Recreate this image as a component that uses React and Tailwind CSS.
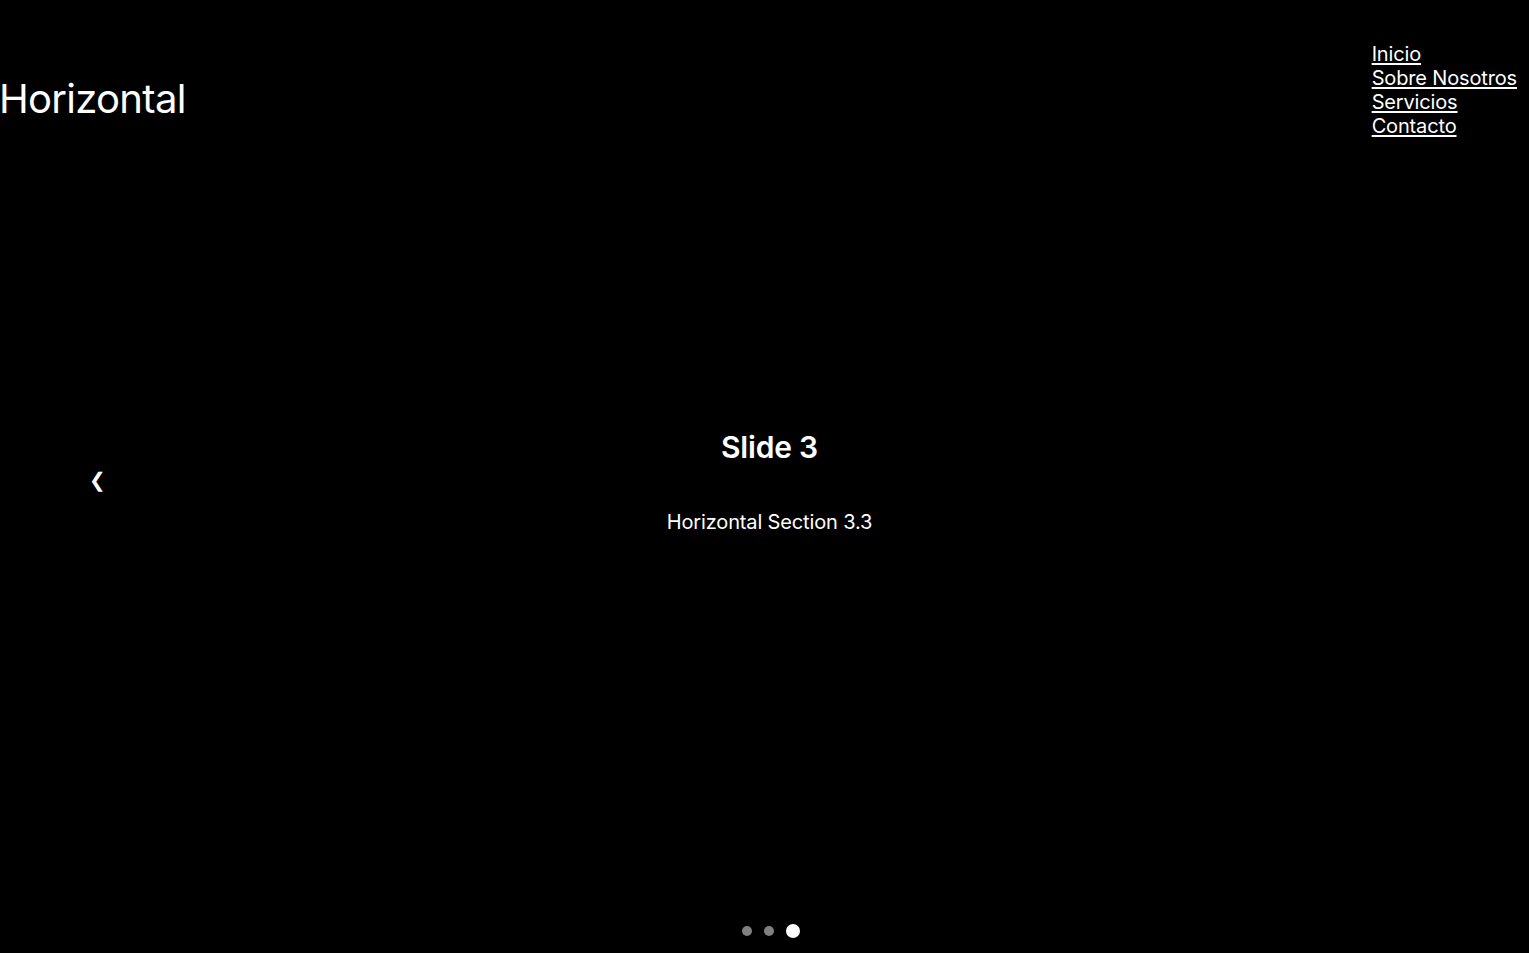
export default function App() {
  const font = { fontFamily: "Inter, 'Noto Sans', sans-serif" };
  return (
    <div className="relative h-[953px] w-full overflow-hidden bg-black text-white" style={font}>
      <header className="flex items-start justify-between">
        <h1 className="ml-[-1px] mt-[75px] text-[40px] font-normal leading-[48px] tracking-[-0.7px]">Horizontal</h1>
        <nav className="mt-[42px] pr-[12px]">
          <ul className="flex flex-col text-[20px] leading-[24px] tracking-[-0.15px]">
            <li><a href="#" className="underline underline-offset-2">Inicio</a></li>
            <li><a href="#" className="underline underline-offset-2">Sobre Nosotros</a></li>
            <li><a href="#" className="underline underline-offset-2">Servicios</a></li>
            <li><a href="#" className="underline underline-offset-2">Contacto</a></li>
          </ul>
        </nav>
      </header>
      <section className="absolute inset-0 flex flex-col items-center justify-center pl-[10px] pt-[12px]">
        <h2 className="text-[30px] font-semibold leading-[36px] tracking-[-0.2px]">Slide 3</h2>
        <p className="mt-[42px] text-[20px] leading-[30px] tracking-[-0.15px]">Horizontal Section 3.3</p>
      </section>
      <button className="absolute left-[89px] top-[467px] text-[20px] leading-[26px]">❮</button>
      <div className="absolute bottom-[15px] left-0 right-0 flex items-center justify-center gap-[12px] pl-[12px]">
        <span className="h-[10px] w-[10px] rounded-full bg-[#808080]" />
        <span className="h-[10px] w-[10px] rounded-full bg-[#808080]" />
        <span className="h-[14px] w-[14px] rounded-full bg-white" />
      </div>
    </div>
  );
}
